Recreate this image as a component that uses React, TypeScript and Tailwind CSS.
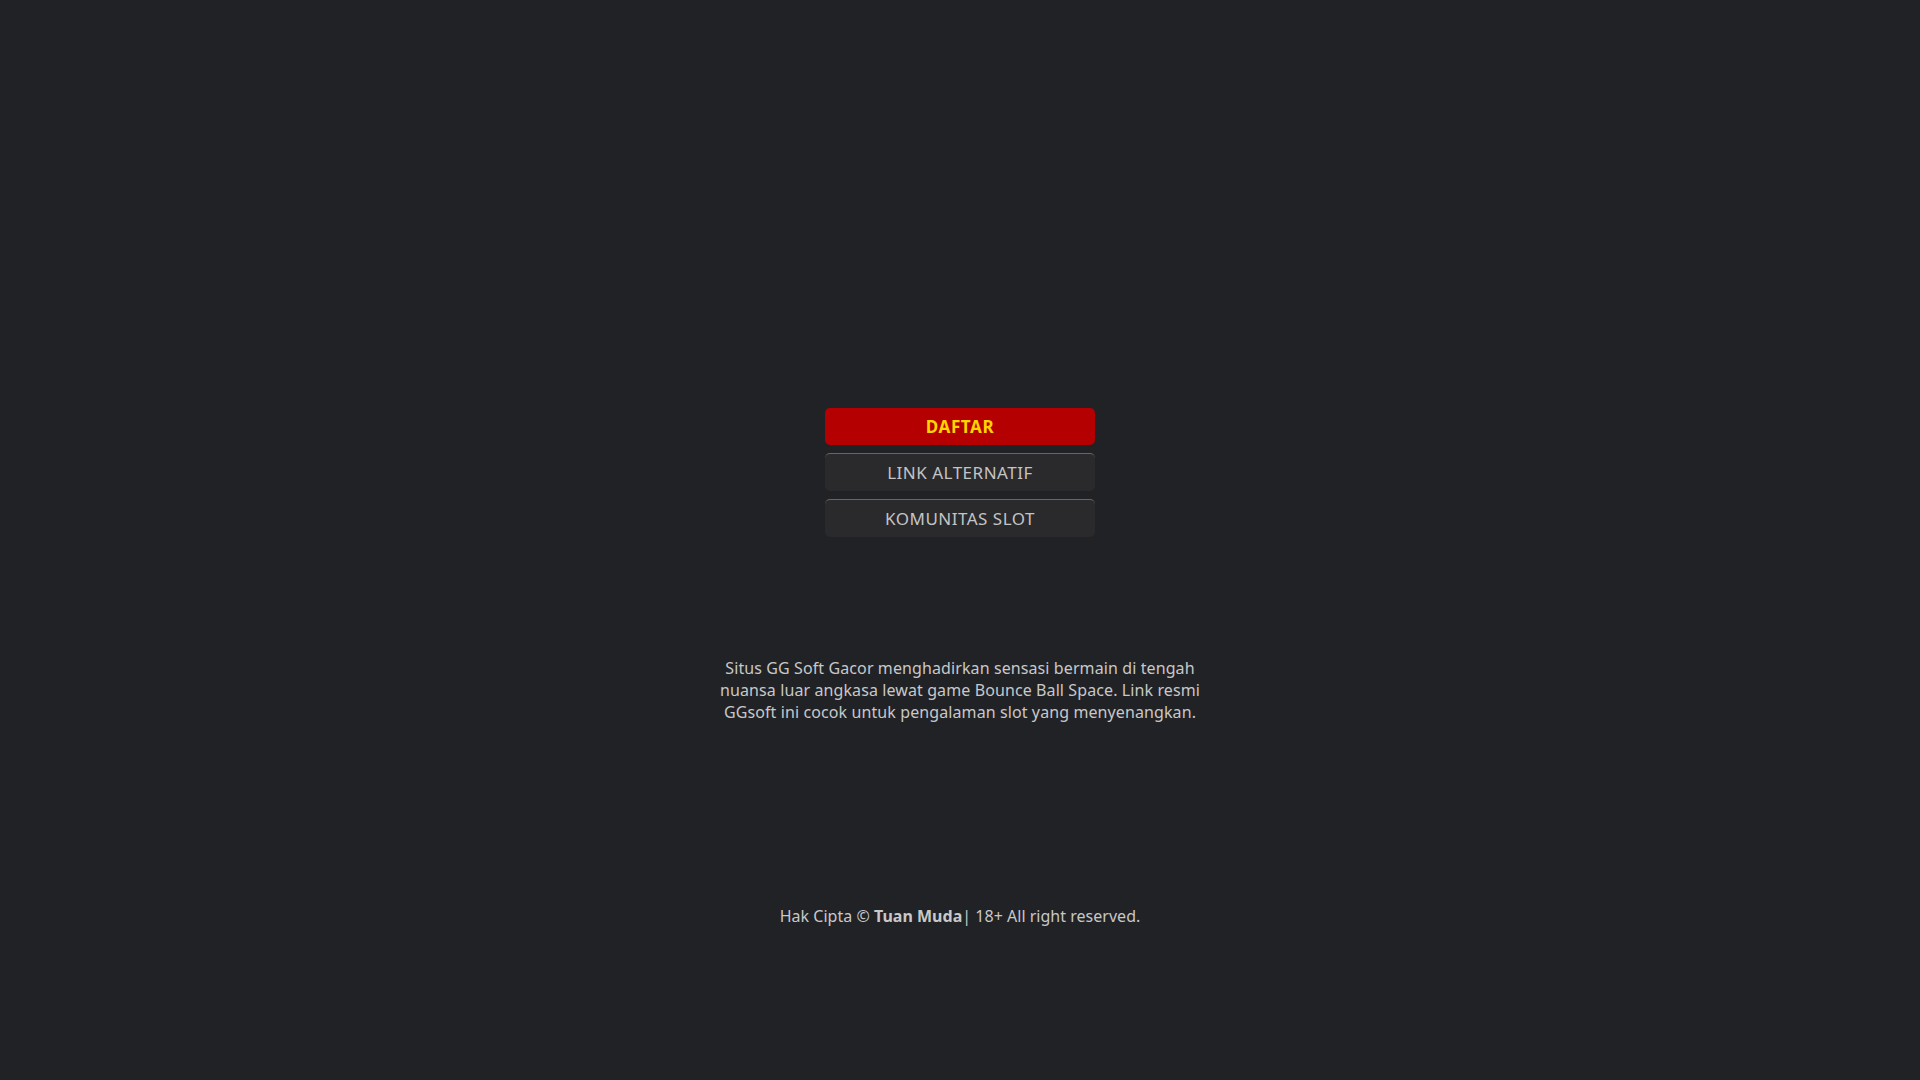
export default function App() {
  const font = { fontFamily: '"Noto Sans", "Open Sans", sans-serif' };

  return (
    <div
      className="min-h-screen bg-[#212226] text-[#c4c4c4] flex flex-col items-center"
      style={font}
    >
      {/* Link buttons */}
      <div className="mt-[408px] flex w-[270px] flex-col gap-2">
        <a
          href="#"
          className="flex h-[37px] items-center justify-center rounded-[5px] bg-[#b40000] text-[17px] font-bold tracking-[0.6px] text-[#ffd200]"
        >
          DAFTAR
        </a>
        <a
          href="#"
          className="flex h-[38px] items-center justify-center rounded-[5px] border-t border-[#6e6556] bg-[#2a2a2d] text-[17px] tracking-[0.5px] text-[#c4c4c4]"
        >
          LINK ALTERNATIF
        </a>
        <a
          href="#"
          className="flex h-[38px] items-center justify-center rounded-[5px] border-t border-[#6e6556] bg-[#2a2a2d] text-[17px] tracking-[0.5px] text-[#c4c4c4]"
        >
          KOMUNITAS SLOT
        </a>
      </div>

      {/* Description */}
      <p className="mt-[120px] max-w-[485px] text-center text-[16px] leading-[22px] tracking-[0.1px] text-[#c8c8c8]">
        Situs GG Soft Gacor menghadirkan sensasi bermain di tengah nuansa luar
        angkasa lewat game Bounce Ball Space. Link resmi GGsoft ini cocok untuk
        pengalaman slot yang menyenangkan.
      </p>

      {/* Footer */}
      <footer className="mt-[182px] text-[16px] leading-[22px] tracking-[0.02px] text-[#c8c8c8]">
        Hak Cipta © <strong className="font-bold">Tuan Muda</strong>| 18+ All
        right reserved.
      </footer>
    </div>
  );
}
